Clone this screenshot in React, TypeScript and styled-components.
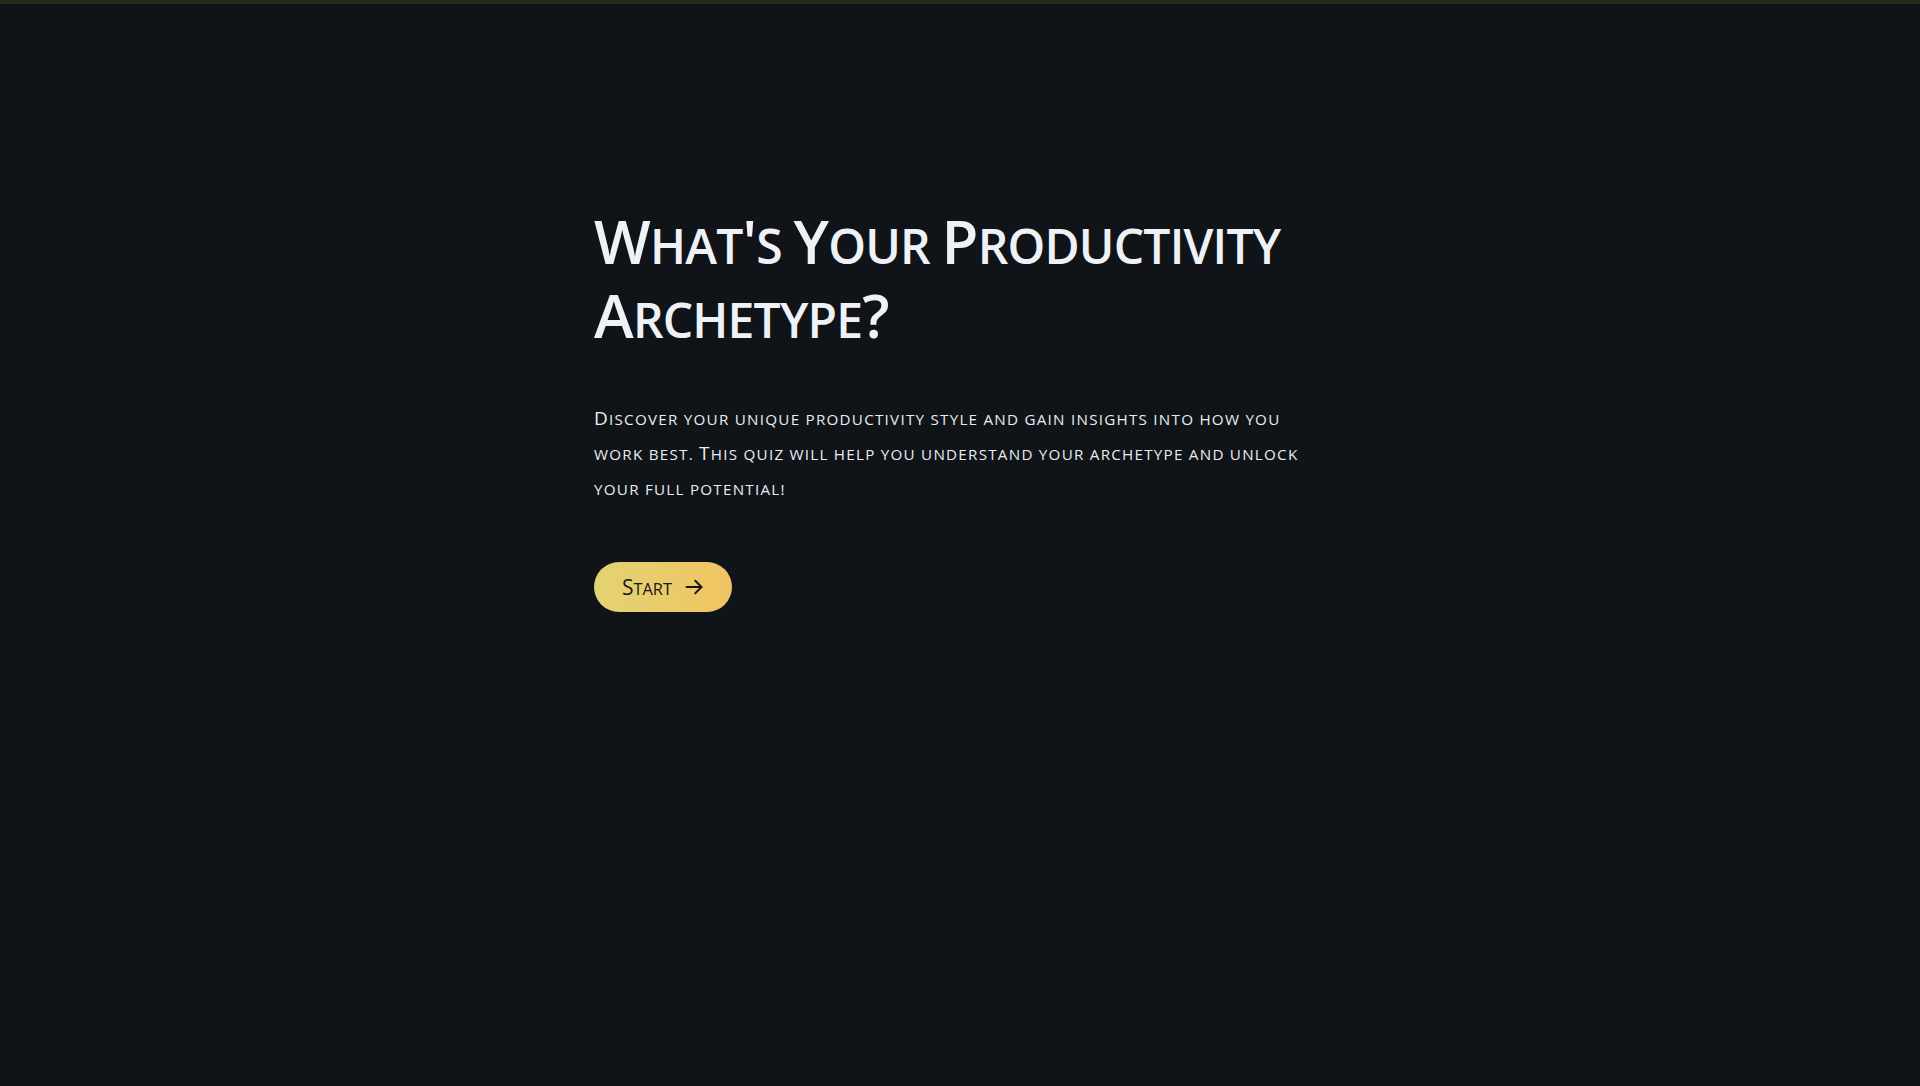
import React from "react";
import styled, { createGlobalStyle } from "styled-components";

const Global = createGlobalStyle`
  html, body { margin: 0; padding: 0; background: #101418; }
  body { font-family: "Open Sans", "DejaVu Sans Condensed", sans-serif; }
`;

const Page = styled.div`
  min-height: 1086px;
  background: #101418;
  border-top: 4px solid #29281f;
  box-sizing: border-box;
  display: flex;
  justify-content: center;
`;

const Content = styled.main`
  width: 732px;
  padding-top: 201px;
  display: flex;
  flex-direction: column;
  align-items: flex-start;
`;

const Title = styled.h1`
  margin: 0;
  font-family: "Open Sans", sans-serif;
  font-size: 60px;
  line-height: 73.5px;
  font-weight: 600;
  color: #eef2f6;
  letter-spacing: -0.8px;
`;

const Lead = styled.p`
  margin: 49px 0 0;
  width: 722px;
  font-family: "Open Sans", sans-serif;
  font-size: 19px;
  line-height: 35px;
  font-weight: 500;
  color: #e8ecf0;
  letter-spacing: 1.25px;
`;

const Low = styled.span<{ $scale: number }>`
  font-size: ${(p) => p.$scale}em;
  line-height: 1;
  text-transform: uppercase;
`;

const StartButton = styled.button`
  margin-top: 56px;
  height: 50px;
  padding: 0 28px 0 28px;
  border: none;
  border-radius: 25px;
  background: linear-gradient(90deg, #e2d373, #f1c462);
  color: #16171b;
  font-family: "Open Sans", sans-serif;
  font-size: 21px;
  font-weight: 400;
  letter-spacing: 0;
  display: flex;
  align-items: center;
  gap: 12px;
  cursor: pointer;
`;

const SmallCaps = ({ text, scale }: { text: string; scale: number }) => (
  <>
    {text.split(/([a-z .,!]+)/).map((part, i) =>
      /^[a-z .,!]+$/.test(part) ? (
        <Low key={i} $scale={scale}>
          {part}
        </Low>
      ) : (
        <React.Fragment key={i}>{part}</React.Fragment>
      )
    )}
  </>
);

const Arrow = () => (
  <svg width="20" height="20" viewBox="0 0 24 24" fill="none" stroke="currentColor" strokeWidth="2.3" strokeLinecap="round" strokeLinejoin="round">
    <path d="M3 12h18" />
    <path d="M13.5 4.5L21 12l-7.5 7.5" />
  </svg>
);

export default function App() {
  return (
    <>
      <Global />
      <Page>
        <Content>
          <Title>
            <SmallCaps text="What's Your Productivity Archetype?" scale={0.8} />
          </Title>
          <Lead>
            <SmallCaps
              text="Discover your unique productivity style and gain insights into how you work best. This quiz will help you understand your archetype and unlock your full potential!"
              scale={0.8}
            />
          </Lead>
          <StartButton>
            <span>
              <SmallCaps text="Start" scale={0.78} />
            </span>
            <Arrow />
          </StartButton>
        </Content>
      </Page>
    </>
  );
}
